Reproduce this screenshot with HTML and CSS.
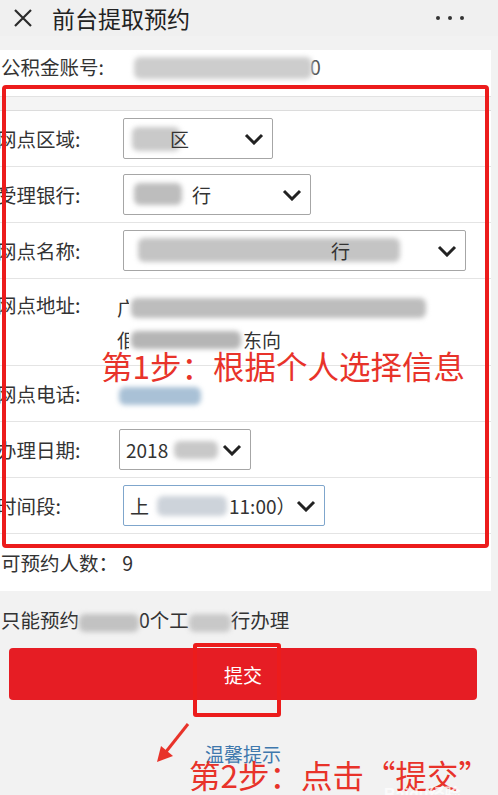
FILE: index.html
```html
<!DOCTYPE html>
<html lang="zh-CN">
<head>
<meta charset="utf-8">
<title>前台提取预约</title>
<link rel="stylesheet" href="styles.css">
</head>
<body>
<div class="page">
  <header class="topbar">
    <svg class="close" width="20" height="20" viewBox="0 0 20 20"><path d="M2 2 L18 18 M18 2 L2 18" stroke="#2b2b2b" stroke-width="2.2" fill="none"/></svg>
    <h1 class="title">前台提取预约</h1>
    <div class="more"><span></span><span></span><span></span></div>
  </header>

  <section class="panel">
    <div class="account">
      <span class="label">公积金账号:</span>
      <span class="blur blur-account"></span>
      <span class="tail">0</span>
    </div>
    <div class="strip"></div>

    <div class="row">
      <span class="label">网点区域:</span>
      <div class="select w-area">
        <span class="blur b-area"></span>
        <span class="val v-area">区</span>
        <svg class="chev" width="20" height="12" viewBox="0 0 20 12"><path d="M2 2 L10 10 L18 2" stroke="#222" stroke-width="3" fill="none"/></svg>
      </div>
    </div>

    <div class="row">
      <span class="label">受理银行:</span>
      <div class="select w-bank">
        <span class="blur b-bank"></span>
        <span class="val v-bank">行</span>
        <svg class="chev" width="20" height="12" viewBox="0 0 20 12"><path d="M2 2 L10 10 L18 2" stroke="#222" stroke-width="3" fill="none"/></svg>
      </div>
    </div>

    <div class="row">
      <span class="label">网点名称:</span>
      <div class="select w-name">
        <span class="blur b-name"></span>
        <span class="val v-name">行</span>
        <svg class="chev" width="20" height="12" viewBox="0 0 20 12"><path d="M2 2 L10 10 L18 2" stroke="#222" stroke-width="3" fill="none"/></svg>
      </div>
    </div>

    <div class="row row-addr">
      <span class="label">网点地址:</span>
      <div class="addr">
        <div class="addr-line"><span class="ch">广</span><span class="blur b-addr1"></span></div>
        <div class="addr-line"><span class="ch">佀</span><span class="blur b-addr2"></span><span>东向</span></div>
      </div>
    </div>

    <div class="row">
      <span class="label">网点电话:</span>
      <span class="blur b-phone"></span>
    </div>

    <div class="row">
      <span class="label">办理日期:</span>
      <div class="select w-date">
        <span class="val">2018</span>
        <span class="blur b-date"></span>
        <svg class="chev" width="20" height="12" viewBox="0 0 20 12"><path d="M2 2 L10 10 L18 2" stroke="#222" stroke-width="3" fill="none"/></svg>
      </div>
    </div>

    <div class="row">
      <span class="label">时间段:</span>
      <div class="select w-time">
        <span class="val">上</span>
        <span class="blur b-time"></span>
        <span class="val v-time">11:00）</span>
        <svg class="chev" width="20" height="12" viewBox="0 0 20 12"><path d="M2 2 L10 10 L18 2" stroke="#222" stroke-width="3" fill="none"/></svg>
      </div>
    </div>

    <div class="row row-last">
      <span class="count">可预约人数： 9</span>
    </div>
  </section>

  <p class="notice">只能预约<span class="blur b-n1"></span>0个工<span class="blur b-n2"></span>行办理</p>

  <div class="btn-wrap">
    <button class="submit">提交</button>
  </div>

  <p class="tips">温馨提示</p>

  <!-- annotations -->
  <div class="anno-box"></div>
  <div class="anno-text1">第1步：根据个人选择信息</div>
  <div class="anno-btn"></div>
  <svg class="anno-arrow" width="40" height="44" viewBox="0 0 40 44"><path d="M33 2 L10 31" stroke="#e8332a" stroke-width="3" fill="none"/><path d="M2 40 L6 24 L18 34 Z" fill="#e8332a"/></svg>
  <div class="anno-text2">第2步：点击“提交”</div>
  <div class="watermark">Baidu经验</div>
</div>
</body>
</html>
```
FILE: styles.css
```css
* { box-sizing: border-box; }
html, body { margin: 0; padding: 0; }
body {
  background: #f2f2f2;
  font-family: "Noto Sans CJK SC", "Noto Sans", sans-serif;
  color: #333;
  width: 498px;
  height: 795px;
  overflow: hidden;
}
.page { position: relative; width: 498px; height: 795px; }

.topbar {
  height: 36px;
  display: flex;
  align-items: center;
  padding-left: 13px;
  background: #f0f0f0;
}
.close { flex: none; }
.title {
  margin: 0 0 0 19px;
  font-size: 23px;
  font-weight: 400;
  color: #222;
  line-height: 30px;
  flex: 1;
}
.more { display: flex; gap: 8px; margin-right: 34px; }
.more span { width: 4px; height: 4px; border-radius: 50%; background: #333; }

.panel {
  margin-top: 14px;
  width: 491px;
  background: #fff;
}
.label {
  font-size: 19.5px;
  line-height: 26px;
  color: #333;
  flex: none;
  margin-left: -3px;
  white-space: nowrap;
}
.account {
  height: 46px;
  padding-top: 4px;
  display: flex;
  align-items: flex-start;
  font-size: 19.5px;
  line-height: 26px;
}
.account .label { margin-left: 1px; width: 133px; }
.tail { color: #555; margin-left: -2px; }
.strip {
  height: 15px;
  background: #f4f4f4;
  border-top: 1px solid #e2e2e2;
  border-bottom: 1px solid #dcdcdc;
}
.row {
  height: 56px;
  border-bottom: 1px solid #e4e4e4;
  display: flex;
  align-items: center;
}
.row .label { width: 126px; }
.row-addr { height: 87px; align-items: flex-start; padding-top: 13px; }
.row-last { height: 57px; border-bottom: none; }

.select {
  position: relative;
  height: 41px;
  border: 1px solid #a6a6a6;
  border-radius: 2px;
  display: flex;
  align-items: center;
  padding-left: 6px;
  font-size: 19px;
  color: #333;
}
.select .chev { position: absolute; right: 8px; top: 14px; }
.w-area { width: 150px; }
.w-bank { width: 188px; }
.w-name { width: 343px; }
.w-date { width: 132px; margin-left: -4px; }
.w-time { width: 202px; border-color: #7fa6cc; }
.val { position: relative; }
.v-area { margin-left: 40px; }
.v-bank { margin-left: 62px; }
.v-name { margin-left: 201px; }
.v-time { margin-left: 2px; }

.blur {
  display: inline-block;
  background: #c9c9c9;
  filter: blur(2.5px);
  border-radius: 6px;
}
.blur-account { width: 178px; height: 22px; margin-top: 3px; background: #cdcdcd; }
.b-area { width: 48px; height: 24px; margin-left: 2px; }
.b-bank { width: 48px; height: 22px; margin-left: 4px; background: #bdbdbd; }
.b-name { width: 262px; height: 24px; margin-left: 4px; background: #c4c4c4; position: absolute; left: 10px; top: 7px; }
.b-date { width: 44px; height: 18px; margin-left: 6px; background: #c8c8c8; }
.b-time { width: 70px; height: 20px; margin-left: 8px; background: #cdd3da; }
.select .b-area, .select .b-bank { position: absolute; left: 6px; top: 8px; }

.addr { font-size: 19px; line-height: 32px; color: #333; margin-left: -6px; }
.addr-line { display: flex; align-items: center; height: 32px; }
.ch { width: 12px; overflow: hidden; display: inline-block; }
.b-addr1 { width: 295px; height: 20px; background: #bdbdbd; margin-left: 2px; }
.b-addr2 { width: 110px; height: 18px; background: #b5b5b5; margin-left: 2px; margin-right: 2px; }
.b-phone { width: 82px; height: 18px; background: #a9c1d6; margin-left: -4px; margin-top: 4px; }

.count { font-size: 19.5px; line-height: 26px; margin-left: 1px; color: #333; }

.notice {
  margin: 16px 0 0 1px;
  font-size: 19.5px;
  line-height: 26px;
  color: #333;
}
.b-n1 { width: 60px; height: 18px; background: #c2c2c2; vertical-align: middle; }
.b-n2 { width: 42px; height: 18px; background: #c8c8c8; vertical-align: middle; }

.btn-wrap { padding: 15px 21px 0 9px; }
.submit {
  display: block;
  width: 468px;
  height: 52px;
  border: none;
  border-radius: 4px;
  background: #e61d24;
  color: #fff;
  font-family: "Noto Sans CJK SC", sans-serif;
  font-size: 19px;
  padding: 0;
}
.tips {
  margin: 42px 0 0 205px;
  font-size: 19px;
  line-height: 24px;
  color: #3f78ad;
}

.anno-box {
  position: absolute;
  left: 2px;
  top: 85px;
  width: 487px;
  height: 463px;
  border: 4px solid #ec1c1c;
  border-radius: 4px;
}
.anno-text1 {
  position: absolute;
  left: 101px;
  top: 345px;
  font-size: 31.5px;
  line-height: 40px;
  color: #e8332a;
  white-space: nowrap;
}
.anno-btn {
  position: absolute;
  left: 193px;
  top: 643px;
  width: 88px;
  height: 74px;
  border: 4px solid #ec1c1c;
  border-radius: 3px;
}
.anno-arrow { position: absolute; left: 155px; top: 722px; }
.anno-text2 {
  position: absolute;
  left: 189px;
  top: 754px;
  font-size: 31.5px;
  line-height: 40px;
  color: #e8332a;
  white-space: nowrap;
}
.watermark {
  position: absolute;
  left: 384px;
  top: 781px;
  font-size: 16px;
  color: rgba(255,255,255,0.75);
  font-family: "Liberation Sans", "Noto Sans CJK SC", sans-serif;
  font-weight: 700;
}
```
